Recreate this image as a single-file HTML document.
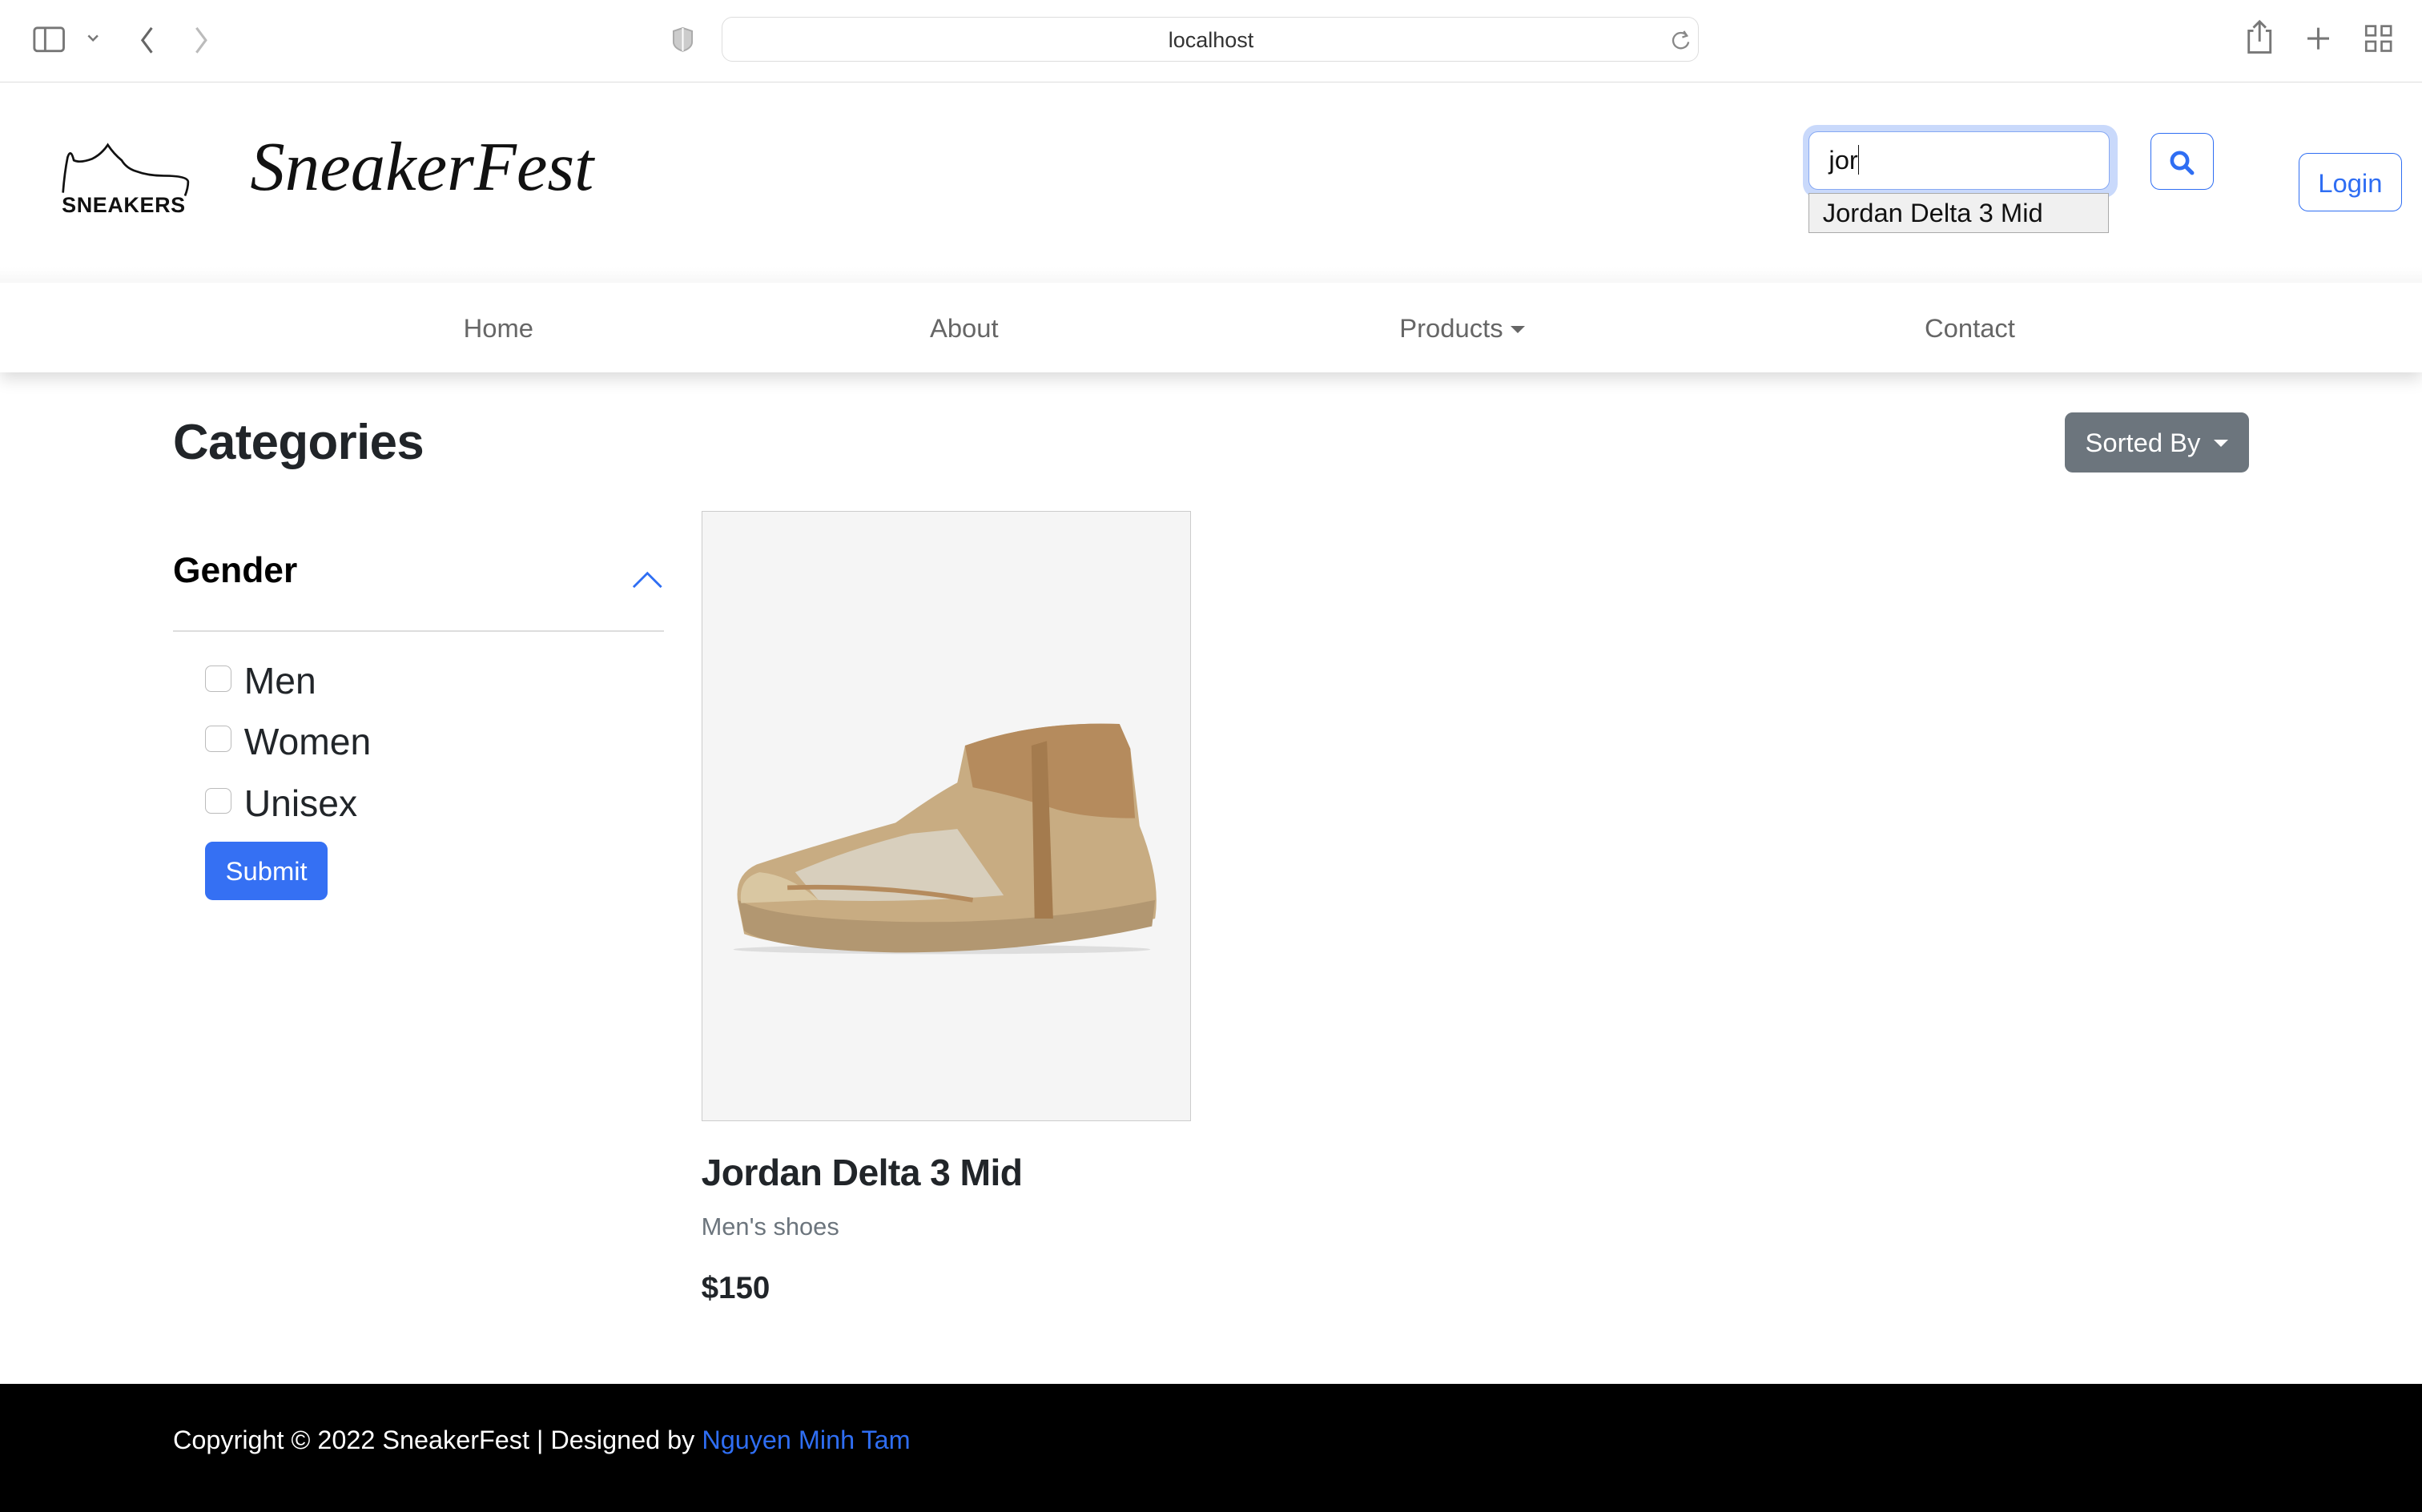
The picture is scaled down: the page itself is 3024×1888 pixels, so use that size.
<!DOCTYPE html>
<html><head><meta charset="utf-8">
<style>
html,body{margin:0;padding:0;background:#fff;}
body{width:1568px;height:979px;zoom:1.928571;position:relative;overflow:hidden;font-family:"Liberation Sans",Arial,sans-serif;color:#212529;}
.a{position:absolute;}
.navi{color:#666;font-size:17px;}
</style></head><body>
<!-- browser chrome -->
<div class="a" style="left:0;top:0;width:1568px;height:53px;background:#fff;border-bottom:1px solid #ddd;"></div>
<svg class="a" style="left:20px;top:15px" width="130" height="22" viewBox="0 0 130 22">
 <rect x="2" y="3" width="19" height="15" rx="2" fill="none" stroke="#777" stroke-width="1.5"/>
 <line x1="9" y1="3" x2="9" y2="18" stroke="#777" stroke-width="1.5"/>
 <path d="M37 8 l3 3 l3 -3" fill="none" stroke="#777" stroke-width="1.3"/>
 <path d="M78 3 l-6 8 l6 8" fill="none" stroke="#666" stroke-width="1.6"/>
 <path d="M107 3 l6 8 l-6 8" fill="none" stroke="#bbb" stroke-width="1.6"/>
</svg>
<svg class="a" style="left:435px;top:17px" width="14" height="17"><path d="M7 1 L13 3 V10 Q13 14 7 16 Q1 14 1 10 V3 Z" fill="#ccc" stroke="#aaa"/><path d="M7 1 V16" stroke="#fff"/></svg>
<div class="a" style="left:467px;top:11px;width:632px;height:28px;border:1px solid #ddd;border-radius:7px;"></div>
<div class="a" style="left:467px;top:18px;width:634px;text-align:center;font-size:14px;color:#333;">localhost</div>
<svg class="a" style="left:1081px;top:18px" width="14" height="16"><path d="M11 5 A5 5 0 1 0 12 9" fill="none" stroke="#888" stroke-width="1.2"/><path d="M9 2 L11 5 L8 6" fill="none" stroke="#888" stroke-width="1.2"/></svg>
<svg class="a" style="left:1452px;top:12px" width="100" height="26">
 <path d="M7 8 H4 V22 H18 V8 H15" fill="none" stroke="#777" stroke-width="1.5"/><path d="M11 2 V15 M7 6 L11 2 L15 6" fill="none" stroke="#777" stroke-width="1.5"/>
 <path d="M49 6 V20 M42 13 H56" stroke="#777" stroke-width="1.6"/>
 <rect x="80" y="5" width="6" height="6" fill="none" stroke="#777" stroke-width="1.4"/><rect x="90" y="5" width="6" height="6" fill="none" stroke="#777" stroke-width="1.4"/><rect x="80" y="15" width="6" height="6" fill="none" stroke="#777" stroke-width="1.4"/><rect x="90" y="15" width="6" height="6" fill="none" stroke="#777" stroke-width="1.4"/>
</svg>
<!-- header -->
<svg class="a" style="left:36px;top:92px" width="90" height="35"><path d="M5 33 Q6 20 8 10 Q10 4 12 12 Q16 14 24 11 Q30 8 34 2 Q38 8 43 12 Q46 17 52 19 Q60 22 70 22 Q86 22 86 26 Q86 30 84 35" fill="none" stroke="#111" stroke-width="1.4"/></svg>
<div class="a" style="left:40px;top:125px;font-size:14px;font-weight:bold;color:#111;letter-spacing:0.3px;">SNEAKERS</div>
<div class="a" style="left:162px;top:82px;font-family:'Liberation Serif',serif;font-style:italic;font-size:45px;color:#111;letter-spacing:0px;">SneakerFest</div>
<div class="a" style="left:1167px;top:81px;width:204px;height:47px;background:#c9d9fb;border-radius:9px;"></div>
<div class="a" style="left:1171px;top:85px;width:194px;height:37px;background:#fff;border:1px solid #86a8f3;border-radius:6px;"></div>
<div class="a" style="left:1184px;top:94px;font-size:17px;color:#111;">jor<span style="border-left:1px solid #111;"></span></div>
<div class="a" style="left:1171px;top:125px;width:193px;height:25px;background:#f0f0f0;border:1px solid #aaa;"></div>
<div class="a" style="left:1180px;top:128px;font-size:17px;color:#111;">Jordan Delta 3 Mid</div>
<div class="a" style="left:1392px;top:86px;width:40px;height:36px;border:1px solid #2f6ef3;border-radius:6px;"></div>
<svg class="a" style="left:1404px;top:97px" width="17" height="17"><circle cx="7" cy="7" r="5" fill="none" stroke="#2f6ef3" stroke-width="2.4"/><path d="M11 11 L15 15" stroke="#2f6ef3" stroke-width="2.6" stroke-linecap="round"/></svg>
<div class="a" style="left:1488px;top:99px;width:66px;height:37px;border:1px solid #2f6ef3;border-radius:6px;color:#2f6ef3;font-size:17px;text-align:center;line-height:38px;">Login</div>
<!-- nav -->
<div class="a" style="left:0;top:183px;width:1568px;height:58px;background:#fff;box-shadow:0 4px 10px rgba(0,0,0,0.15);"></div>
<div class="a" style="left:0;top:173px;width:1568px;height:10px;background:linear-gradient(#fff,#f7f7f7);"></div>
<div class="a navi" style="left:300px;top:203px;">Home</div>
<div class="a navi" style="left:602px;top:203px;">About</div>
<div class="a navi" style="left:906px;top:203px;">Products <span style="display:inline-block;border-top:5px solid #666;border-left:5px solid transparent;border-right:5px solid transparent;vertical-align:3px;"></span></div>
<div class="a navi" style="left:1246px;top:203px;">Contact</div>
<!-- content -->
<div class="a" style="left:112px;top:268px;font-size:32px;font-weight:bold;letter-spacing:-0.3px;">Categories</div>
<div class="a" style="left:1337px;top:267px;width:119px;height:39px;background:#6c757d;border-radius:5px;color:#fff;font-size:17px;line-height:39px;text-indent:13px;">Sorted By <span style="display:inline-block;border-top:5px solid #fff;border-left:5px solid transparent;border-right:5px solid transparent;vertical-align:3px;margin-left:4px;"></span></div>
<div class="a" style="left:112px;top:357px;font-size:23px;font-weight:bold;color:#000;">Gender</div>
<svg class="a" style="left:409px;top:368px" width="22" height="14"><path d="M1 12 L10 3 L19 12" fill="none" stroke="#2f6ef3" stroke-width="1.5"/></svg>
<div class="a" style="left:112px;top:408px;width:318px;height:1px;background:#ddd;"></div>
<div class="a" style="left:133px;top:431px;width:16px;height:16px;border:1px solid #bbb;border-radius:4px;"></div>
<div class="a" style="left:158px;top:427px;font-size:24px;">Men</div>
<div class="a" style="left:133px;top:470px;width:16px;height:16px;border:1px solid #bbb;border-radius:4px;"></div>
<div class="a" style="left:158px;top:466px;font-size:24px;">Women</div>
<div class="a" style="left:133px;top:510px;width:16px;height:16px;border:1px solid #bbb;border-radius:4px;"></div>
<div class="a" style="left:158px;top:506px;font-size:24px;">Unisex</div>
<div class="a" style="left:133px;top:545px;width:79px;height:38px;background:#3570f3;border-radius:5px;color:#fff;font-size:17px;text-align:center;line-height:38px;">Submit</div>
<!-- card -->
<div class="a" style="left:454px;top:331px;width:316px;height:394px;background:#f5f5f5;border:1px solid #ccc;"></div>
<svg class="a" style="left:470px;top:455px" width="290" height="175" viewBox="0 0 290 175">
 <ellipse cx="140" cy="160" rx="135" ry="3" fill="#ddd"/>
 <path d="M8 130 Q5 112 20 105 Q60 92 110 78 Q135 60 150 52 L155 28 Q200 12 255 14 L262 30 L268 80 Q282 115 278 140 Q200 160 110 160 Q40 160 12 150 Z" fill="#c8ac82"/>
 <path d="M8 128 Q30 140 110 142 Q200 144 278 128 L276 145 Q200 162 110 162 Q30 160 12 148 Z" fill="#b29771"/>
 <path d="M155 28 Q200 12 255 14 L262 30 L265 75 Q230 75 210 68 Q185 60 160 55 Z" fill="#b58b5d"/>
 <path d="M45 110 Q80 95 120 85 L150 82 L180 125 Q120 130 60 128 Z" fill="#d8cfbd"/>
 <path d="M198 28 L208 25 L212 140 L200 140 Z" fill="#a47b4e"/>
 <path d="M10 130 Q8 114 22 110 Q42 112 60 128 Z" fill="#d9c7a2"/>
 <path d="M40 120 Q100 118 160 128" fill="none" stroke="#b58b5d" stroke-width="3"/>
</svg>
<div class="a" style="left:454px;top:745px;font-size:24px;font-weight:bold;letter-spacing:-0.3px;">Jordan Delta 3 Mid</div>
<div class="a" style="left:454px;top:785px;font-size:16px;color:#6c757d;">Men's shoes</div>
<div class="a" style="left:454px;top:823px;font-size:20px;font-weight:bold;">$150</div>
<!-- footer -->
<div class="a" style="left:0;top:896px;width:1568px;height:83px;background:#000;"></div>
<div class="a" style="left:112px;top:923px;font-size:16.8px;color:#fff;">Copyright © 2022 SneakerFest | Designed by <span style="color:#2f6ef3;">Nguyen Minh Tam</span></div>
</body></html>
